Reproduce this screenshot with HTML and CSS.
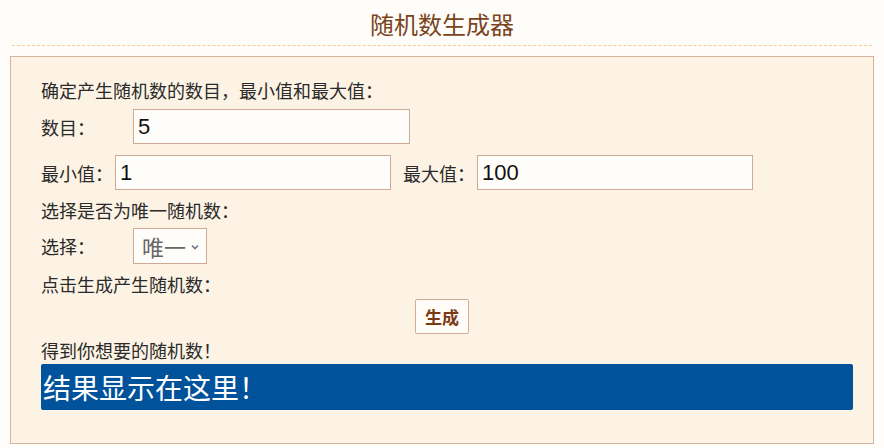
FILE: index.html
```html
<!DOCTYPE html>
<html lang="zh">
<head>
<meta charset="utf-8">
<title>随机数生成器</title>
<link rel="stylesheet" href="styles.css">
</head>
<body>
<header class="header"><h1 class="title">随机数生成器</h1></header>
<main class="panel">
  <p class="line line-first">确定产生随机数的数目，最小值和最大值：</p>
  <div class="row row-count">
    <span class="label label-fixed">数目：</span>
    <input class="field field-count" type="text" value="5">
  </div>
  <div class="row row-range">
    <span class="label">最小值：</span>
    <input class="field field-range" type="text" value="1">
    <span class="label label-max">最大值：</span>
    <input class="field field-range" type="text" value="100">
  </div>
  <p class="line line-unique">选择是否为唯一随机数：</p>
  <div class="row row-select">
    <span class="label label-fixed">选择：</span>
    <div class="select">
      <span class="select-text">唯一</span>
      <svg class="chevron" width="8" height="6" viewBox="0 0 8 6"><path d="M1 1.5 L4 4.5 L7 1.5" fill="none" stroke="#6d7a86" stroke-width="1.6"/></svg>
    </div>
  </div>
  <p class="line line-click">点击生成产生随机数：</p>
  <div class="row row-button">
    <button class="btn" type="button">生成</button>
  </div>
  <p class="line line-result">得到你想要的随机数！</p>
  <div class="result">结果显示在这里！</div>
</main>
</body>
</html>
```
FILE: styles.css
```css
html, body {
  margin: 0;
  padding: 0;
}
body {
  background: #fefdf9;
  font-family: "Noto Sans CJK SC", "Noto Sans", sans-serif;
  color: #333;
}
.header {
  margin: 0 12px;
  padding: 10px 0 7px;
  border-bottom: 1px dashed #f9cd96;
  text-align: center;
}
.title {
  margin: 0;
  font-size: 24px;
  line-height: 28px;
  font-weight: normal;
  color: #7b4420;
}
.panel {
  margin: 10px 10px 0;
  border: 1px solid #d6b39b;
  background: #fcf3e4;
  padding: 23px 20px 34px 30px;
  height: 388px;
  box-sizing: border-box;
}
.line {
  margin: 0;
  font-size: 18px;
  line-height: 20px;
  color: #2a2a2a;
}
.line-unique { margin-top: 10px; }
.line-click { margin-top: 10px; }
.line-result { margin-top: 6px; }
.row {
  display: flex;
  align-items: center;
  font-size: 18px;
  color: #2a2a2a;
}
.row-count { margin-top: 9px; }
.row-range { margin-top: 11px; }
.row-select { margin-top: 8px; }
.row-button {
  margin-top: 5px;
  justify-content: center;
  padding-right: 10px;
}
.label {
  margin-right: 2px;
  line-height: 20px;
}
.label-fixed {
  width: 92px;
  margin-right: 0;
}
.label-max {
  margin-left: 12px;
}
.field {
  box-sizing: border-box;
  height: 35px;
  border: 1px solid #cfa994;
  background: #fffdf9;
  font-family: "Liberation Sans", Arial, sans-serif;
  font-size: 22px;
  color: #111;
  padding: 0 4px;
  outline: none;
}
.field-count { width: 277px; }
.field-range { width: 276px; }
.select {
  box-sizing: border-box;
  width: 74px;
  height: 36px;
  border: 1px solid #cfa994;
  background: #fffdf9;
  display: flex;
  align-items: center;
  padding-left: 8px;
  gap: 5px;
}
.select-text {
  font-size: 22px;
  color: #666;
  line-height: 26px;
}
.chevron {
  margin-top: 1px;
}
.btn {
  box-sizing: border-box;
  width: 54px;
  height: 35px;
  border: 1px solid #d2ab93;
  border-radius: 2px;
  background: #fffcf7;
  color: #7a3a14;
  font-family: "Noto Sans CJK SC", sans-serif;
  font-weight: bold;
  font-size: 17px;
  padding: 0;
}
.result {
  margin-top: 4px;
  height: 46px;
  box-sizing: border-box;
  background: #00529b;
  border-radius: 2px;
  color: #fff;
  font-size: 28px;
  line-height: 46px;
  padding-left: 2px;
}
```
